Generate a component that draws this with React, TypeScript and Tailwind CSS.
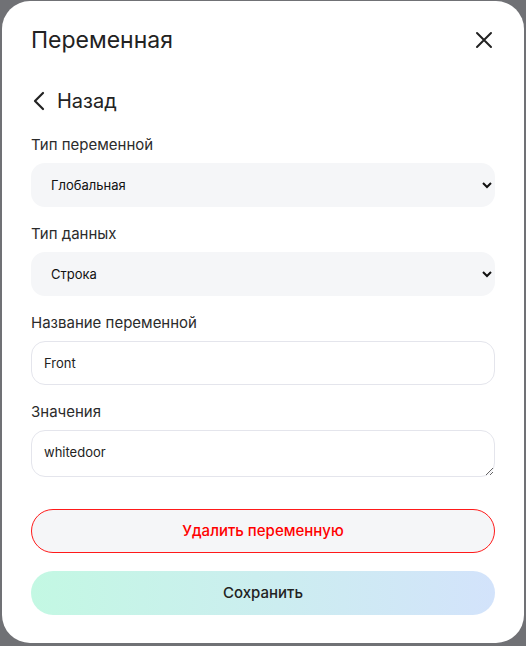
import { useState } from "react";

const labelCls = "mb-2 block text-[15px] leading-[21px] text-[#2b2b2b]";

export default function App() {
  const [scope, setScope] = useState("global");
  const [type, setType] = useState("string");
  const [name, setName] = useState("Front");
  const [value, setValue] = useState("whitedoor");

  return (
    <div
      className="flex h-[646px] w-[526px] bg-[#707175] px-[2px] pt-px pb-[3px]"
      style={{ fontFamily: 'Inter, "Noto Sans", sans-serif' }}
    >
      <div className="flex flex-1 flex-col rounded-[28px] bg-white px-[29px] pt-[25px]">
        <div className="flex h-7 items-center justify-between">
          <h2 className="text-[23px] leading-7 text-[#222]">Переменная</h2>
          <button type="button" aria-label="Закрыть" className="mr-[2px] text-[#222]">
            <svg width="18" height="18" viewBox="0 0 18 18" fill="none" stroke="currentColor" strokeWidth="2" strokeLinecap="round">
              <path d="M2 2l14 14M16 2L2 16" />
            </svg>
          </button>
        </div>

        <button type="button" className="mt-[33px] flex h-7 items-center gap-[11px] self-start text-[#222]">
          <svg width="14" height="20" viewBox="0 0 14 20" fill="none" stroke="currentColor" strokeWidth="2.2" strokeLinecap="round" strokeLinejoin="round" className="ml-[1px]">
            <path d="M11 2L3 10l8 8" />
          </svg>
          <span className="text-[20px] leading-7">Назад</span>
        </button>

        <div className="mt-[19px]">
          <label className={labelCls}>Тип переменной</label>
          <select
            value={scope}
            onChange={(e) => setScope(e.target.value)}
            className="h-11 w-full rounded-[14px] bg-[#f5f6f8] pr-1 pl-4 text-[13px] text-[#111] outline-none"
          >
            <option value="global">Глобальная</option>
            <option value="local">Локальная</option>
          </select>
        </div>

        <div className="mt-4">
          <label className={labelCls}>Тип данных</label>
          <select
            value={type}
            onChange={(e) => setType(e.target.value)}
            className="h-11 w-full rounded-[14px] bg-[#f5f6f8] pr-1 pl-4 text-[13px] text-[#111] outline-none"
          >
            <option value="string">Строка</option>
            <option value="number">Число</option>
          </select>
        </div>

        <div className="mt-4">
          <label className={labelCls}>Название переменной</label>
          <input
            value={name}
            onChange={(e) => setName(e.target.value)}
            className="h-11 w-full rounded-[14px] border border-[#e4e5ec] bg-white px-3 text-[13px] text-[#222] outline-none"
          />
        </div>

        <div className="mt-4">
          <label className={labelCls}>Значения</label>
          <textarea
            value={value}
            onChange={(e) => setValue(e.target.value)}
            className="block h-[47px] w-full rounded-[14px] border border-[#e4e5ec] bg-white px-3 pt-[13px] text-[13px] leading-4 text-[#222] outline-none"
          />
        </div>

        <button
          type="button"
          className="mt-8 h-11 w-full rounded-full border border-[#ff1a1a] bg-[#f5f6f8] text-[15px] font-medium text-[#f00]"
        >
          Удалить переменную
        </button>

        <button
          type="button"
          className="mt-[18px] h-11 w-full rounded-full bg-gradient-to-r from-[#c3f8e3] to-[#d3e3fb] text-[15px] font-medium text-[#222]"
        >
          Сохранить
        </button>
      </div>
    </div>
  );
}
